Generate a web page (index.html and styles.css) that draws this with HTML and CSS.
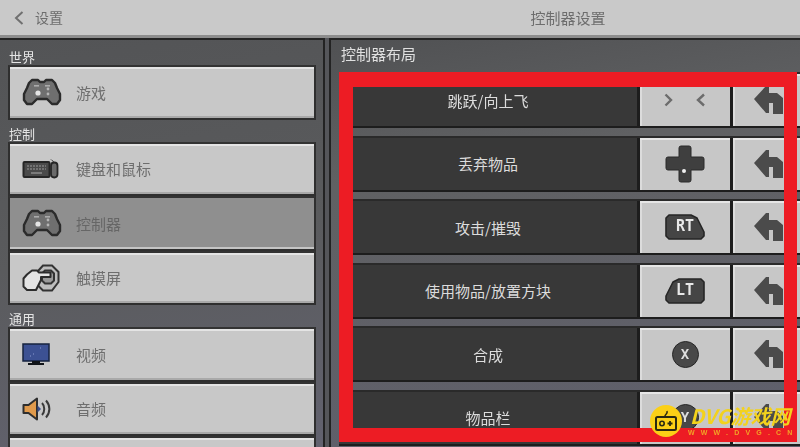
FILE: index.html
```html
<!DOCTYPE html>
<html>
<head>
<meta charset="utf-8">
<title>控制器设置</title>
<link rel="stylesheet" href="styles.css">
</head>
<body>
<svg class="defs" width="0" height="0">
	<symbol id="pad" viewBox="0 0 40 28">
		<path d="M10 2h6l2 2h4l2-2h6l3 3 2 5 3 6v6l-3 4h-5l-5-5H15l-5 5H5l-3-4v-6l3-6 2-5z" fill="#6f6f6f" stroke="#2b2b2b" stroke-width="2.4" stroke-linejoin="round"/>
		<rect x="12" y="7" width="5" height="1.6" fill="#ababab"/>
		<rect x="23" y="7" width="5" height="1.6" fill="#ababab"/>
		<circle cx="16" cy="15" r="2.6" fill="#e4e4e4"/>
		<circle cx="26" cy="11" r="1.4" fill="#b5b5b5"/>
		<circle cx="26" cy="16" r="1.4" fill="#b5b5b5"/>
	</symbol>
	<symbol id="back" viewBox="0 0 30 28">
		<path d="M0 13 12 0h3v7h8l6 5v16h-10V17h-4v10h-3z" fill="#4b4b4b"/>
	</symbol>
</svg>

<div class="screen">
	<header class="topbar">
		<div class="top-left">
			<svg class="chev" width="10" height="14" viewBox="0 0 10 14"><path d="M8.5 1 2 7l6.500 6" fill="none" stroke="#707070" stroke-width="2"/></svg>
			<span>设置</span>
		</div>
		<div class="top-title">控制器设置</div>
	</header>

	<div class="panes">
		<nav class="side">
			<div class="side-label">世界</div>
			<div class="side-btn"><span class="side-icon"><svg width="40" height="28"><use href="#pad"/></svg></span>游戏</div>

			<div class="side-label">控制</div>
			<div class="side-btn">
				<span class="side-icon">
					<svg width="37" height="20" viewBox="0 0 37 20">
						<rect x="1.500" y="3" width="26" height="15" rx="1" fill="#4a4a4a" stroke="#262626" stroke-width="2"/>
						<path d="M5 7h19M5 10h19" stroke="#808080" stroke-width="1.400" stroke-dasharray="2 1"/>
						<path d="M9 14h11" stroke="#8c8c8c" stroke-width="1.500"/>
						<rect x="29" y="3.500" width="6.500" height="15" rx="3.200" fill="#6a6a6a" stroke="#262626" stroke-width="1.800"/>
						<path d="M32 3.500C32 2 30 2 29 .5" fill="none" stroke="#333" stroke-width="1"/>
					</svg>
				</span>键盘和鼠标
			</div>
			<div class="side-btn is-active"><span class="side-icon"><svg width="40" height="28"><use href="#pad"/></svg></span>控制器</div>
			<div class="side-btn">
				<span class="side-icon">
					<svg width="38" height="28" viewBox="0 0 38 28">
						<path d="M21 1.500h9l6.500 6.500v10L30 26.500h-9l-5-5V7z" fill="#bdbdbd" stroke="#333" stroke-width="2"/>
						<path d="M23 6.500h6l3 3v7l-3 3h-6l-3-3v-7z" fill="#9a9a9a" stroke="#333" stroke-width="2"/>
						<path d="M10 6.500h5l2 2h11.500v4.500H19v3l-3 6-2 4H5l-3.500-3.500v-8L5 10.500z" fill="#e4e4e4" stroke="#2c2c2c" stroke-width="2" stroke-linejoin="round"/>
					</svg>
				</span>触摸屏
			</div>

			<div class="side-label">通用</div>
			<div class="side-btn">
				<span class="side-icon">
					<svg width="28" height="23" viewBox="0 0 28 23">
						<rect x="1" y="1" width="26" height="17" fill="#3c5193" stroke="#16233f" stroke-width="1.500"/>
						<path d="M10 18h8v2h4v2H6v-2h4z" fill="#101418"/>
						<path d="M18 5h1M11 11h1M8 13h1" stroke="#8a9ad0"/>
					</svg>
				</span>视频
			</div>
			<div class="side-btn">
				<span class="side-icon">
					<svg width="31" height="24" viewBox="0 0 31 24">
						<path d="M1.500 8h5L15 1.500v21L6.500 16h-5z" fill="#e09a4c" stroke="#2e2e2e" stroke-width="2" stroke-linejoin="round"/>
						<path d="M15.500 8.500l3.500 3.500-3.500 3.500z" fill="#3a4f8c"/>
						<path d="M20 6c3 3 3 9 0 12M24 3.500c4.500 5 4.500 12 0 17" fill="none" stroke="#3a3a3a" stroke-width="2"/>
					</svg>
				</span>音频
			</div>
			<div class="side-btn"></div>
		</nav>

		<main class="layout">
			<div class="layout-title">控制器布局</div>
			<div class="bind">
				<div class="bind-name">跳跃/向上飞</div>
				<div class="bind-key">
					<svg width="42" height="14" viewBox="0 0 42 14"><path d="M1.500 1.500 7 7l-5.500 5.500M40 1.500 34 7l6 5.500" fill="none" stroke="#6c6c6c" stroke-width="2.400"/></svg>
				</div>
				<div class="bind-reset"><svg width="30" height="28"><use href="#back"/></svg></div>
			</div>
			<div class="bind">
				<div class="bind-name">丢弃物品</div>
				<div class="bind-key">
					<svg width="40" height="38" viewBox="0 0 40 38">
						<path d="M14 3q0-2 2-2h8q2 0 2 2v9h11q2 0 2 2v9q0 2-2 2H26v10q0 2-2 2h-8q-2 0-2-2V25H3q-2 0-2-2v-9q0-2 2-2h11z" fill="#3f3f3f" stroke="#2a2a2a" stroke-width="1"/>
						<circle cx="19" cy="26" r="2" fill="#f0f0f0"/>
					</svg>
				</div>
				<div class="bind-reset"><svg width="30" height="28"><use href="#back"/></svg></div>
			</div>
			<div class="bind">
				<div class="bind-name">攻击/摧毁</div>
				<div class="bind-key">
					<span class="trigger"><svg width="40" height="26" viewBox="0 0 40 26"><path d="M4 1h22l6 3 7 14v4l-3 3H4l-3-3V4z" fill="#454545" stroke="#262626" stroke-width="1.600" stroke-linejoin="round"/></svg><b>RT</b></span>
				</div>
				<div class="bind-reset"><svg width="30" height="28"><use href="#back"/></svg></div>
			</div>
			<div class="bind">
				<div class="bind-name">使用物品/放置方块</div>
				<div class="bind-key">
					<span class="trigger"><svg width="40" height="26" viewBox="0 0 40 26"><path d="M36 1H14L8 4 1 18v4l3 3h32l3-3V4z" fill="#454545" stroke="#262626" stroke-width="1.600" stroke-linejoin="round"/></svg><b>LT</b></span>
				</div>
				<div class="bind-reset"><svg width="30" height="28"><use href="#back"/></svg></div>
			</div>
			<div class="bind">
				<div class="bind-name">合成</div>
				<div class="bind-key"><span class="round-key">X</span></div>
				<div class="bind-reset"><svg width="30" height="28"><use href="#back"/></svg></div>
			</div>
			<div class="bind">
				<div class="bind-name">物品栏</div>
				<div class="bind-key"><span class="round-key">Y</span></div>
				<div class="bind-reset"><svg width="30" height="28"><use href="#back"/></svg></div>
			</div>
			<div class="red-box"></div>
		</main>
	</div>
</div>

<div class="mark">
	<span class="mark-dot">
		<svg width="24" height="22" viewBox="0 0 24 22">
			<path d="M11 6C11 4 14 4 13 1" fill="none" stroke="#2a2a12" stroke-width="1.500"/>
			<rect x="2" y="7" width="20" height="13" rx="1.500" fill="none" stroke="#2a2a12" stroke-width="2"/>
			<circle cx="8" cy="13.500" r="2.200" fill="none" stroke="#2a2a12" stroke-width="1.600"/>
			<path d="M13.500 13.500h5M16 11v5" stroke="#2a2a12" stroke-width="1.800"/>
		</svg>
	</span>
	<div class="mark-text">
		<div class="mark-name">DVG游戏网</div>
		<div class="mark-url">WWW.DVG.CN</div>
	</div>
</div>
</body>
</html>
```
FILE: styles.css
```css
html, body {
	margin: 0;
	height: 100%;
	overflow: hidden;
}

body {
	position: relative;
	font-family: "Noto Sans CJK SC", "Noto Sans", sans-serif;
	background: #55565a;
}

.defs {
	position: absolute;
}

/* the reference is a soft video frame */
.screen {
	height: 447px;
	display: flex;
	flex-direction: column;
	overflow: hidden;
	filter: blur(0.6px);
}

.topbar {
	height: 35px;
	flex: none;
	display: flex;
	background: #c9c9c9;
	border-bottom: 3px solid #8d8d8d;
	color: #6d6d6d;
	font-size: 15px;
	line-height: 35px;
}

.top-left {
	width: 330px;
	display: flex;
	align-items: center;
	gap: 11px;
	padding-left: 14px;
	box-sizing: border-box;
	font-size: 14px;
}

.top-title {
	flex: 1;
	text-align: center;
	padding-left: 6px;
}

.panes {
	flex: 1;
	display: flex;
	gap: 4px;
	min-height: 0;
}

.side {
	width: 325px;
	box-sizing: border-box;
	padding: 3px 7px 0 8px;
	border-top: 2px solid #232323;
	border-right: 2px solid #232323;
	background: linear-gradient(170deg, #535456, #5a5b5d 50%, #62626f);
	overflow: hidden;
}

.side-label {
	height: 22px;
	color: #e4e4e4;
	font-size: 13px;
	line-height: 28px;
	padding-left: 1px;
}

.side-btn {
	height: 54.5px;
	box-sizing: border-box;
	display: flex;
	align-items: center;
	background: #c8c8c8;
	border: 2px solid #2f2f2f;
	border-top-color: #333;
	box-shadow: inset 0 2px 0 #e4e4e4, inset 0 -2px 0 #a9a9a9;
	color: #6e6e6e;
	font-size: 15px;
	padding-left: 12px;
}

.side-btn.is-active {
	background: #8f8f8f;
	box-shadow: inset 0 -2px 0 #c4c4c4;
	color: #666;
}

.side-icon {
	width: 54px;
	flex: none;
	display: flex;
	align-items: center;
}

.layout {
	flex: 1;
	position: relative;
	box-sizing: border-box;
	padding: 0 0 0 8px;
	border-top: 2px solid #232323;
	border-left: 2px solid #232323;
	background: linear-gradient(170deg, #505153, #606163 30%, #5f5f6c);
	min-width: 0;
	overflow: hidden;
}

.layout-title {
	height: 34px;
	color: #e0e0e0;
	font-size: 15px;
	line-height: 27px;
	padding-left: 2px;
}

.bind {
	height: 54px;
	box-sizing: border-box;
	display: flex;
	gap: 3px;
	margin-bottom: 9.5px;
	background: #1d1d1d;
	border-bottom: 2px solid #1d1d1d;
	box-shadow: 0 -2px 0 #2a2a2a;
}

.bind-name {
	width: 298px;
	flex: none;
	display: flex;
	align-items: center;
	justify-content: center;
	background: #383838;
	color: #dcdcdc;
	font-size: 15px;
}

.bind-key, .bind-reset {
	display: flex;
	align-items: center;
	background: #c7c7c7;
	box-shadow: inset 0 2px 0 #e6e6e6, inset 2px 0 0 #dcdcdc;
}

.bind-key {
	width: 90px;
	flex: none;
	justify-content: center;
}

.bind-reset {
	flex: 1;
	padding-left: 21px;
}

.trigger {
	position: relative;
	display: flex;
}

.trigger b {
	position: absolute;
	inset: 0;
	text-align: center;
	color: #e8e8e8;
	font: bold 15px/24px "DejaVu Sans Mono", monospace;
}

.round-key {
	width: 25px;
	height: 25px;
	border-radius: 50%;
	background: #484848;
	border: 1px solid #262626;
	color: #dedede;
	font: bold 14px/25px "DejaVu Sans Mono", monospace;
	text-align: center;
}

/* marker someone drew on the screenshot */
.red-box {
	position: absolute;
	left: 8px;
	top: 32px;
	width: 458px;
	height: 370px;
	box-sizing: border-box;
	border: 14px solid #ed1c24;
	border-top-width: 15px;
	border-right-width: 13px;
}

.mark {
	position: absolute;
	left: 650px;
	top: 405px;
	display: flex;
	gap: 8px;
}

.mark-dot {
	width: 32px;
	height: 32px;
	border-radius: 50%;
	background: #fbd016;
	display: flex;
	align-items: center;
	justify-content: center;
}

.mark-text {
	width: 106px;
}

.mark-name {
	color: #f3d21c;
	font-size: 20px;
	font-weight: 700;
	font-style: italic;
	line-height: 22px;
	height: 22px;
	white-space: nowrap;
}

.mark-url {
	color: #f2a326;
	font: bold 7px/9px "Liberation Sans", sans-serif;
	letter-spacing: 6.2px;
	white-space: nowrap;
	margin-left: -2px;
	margin-top: 1px;
}
```
